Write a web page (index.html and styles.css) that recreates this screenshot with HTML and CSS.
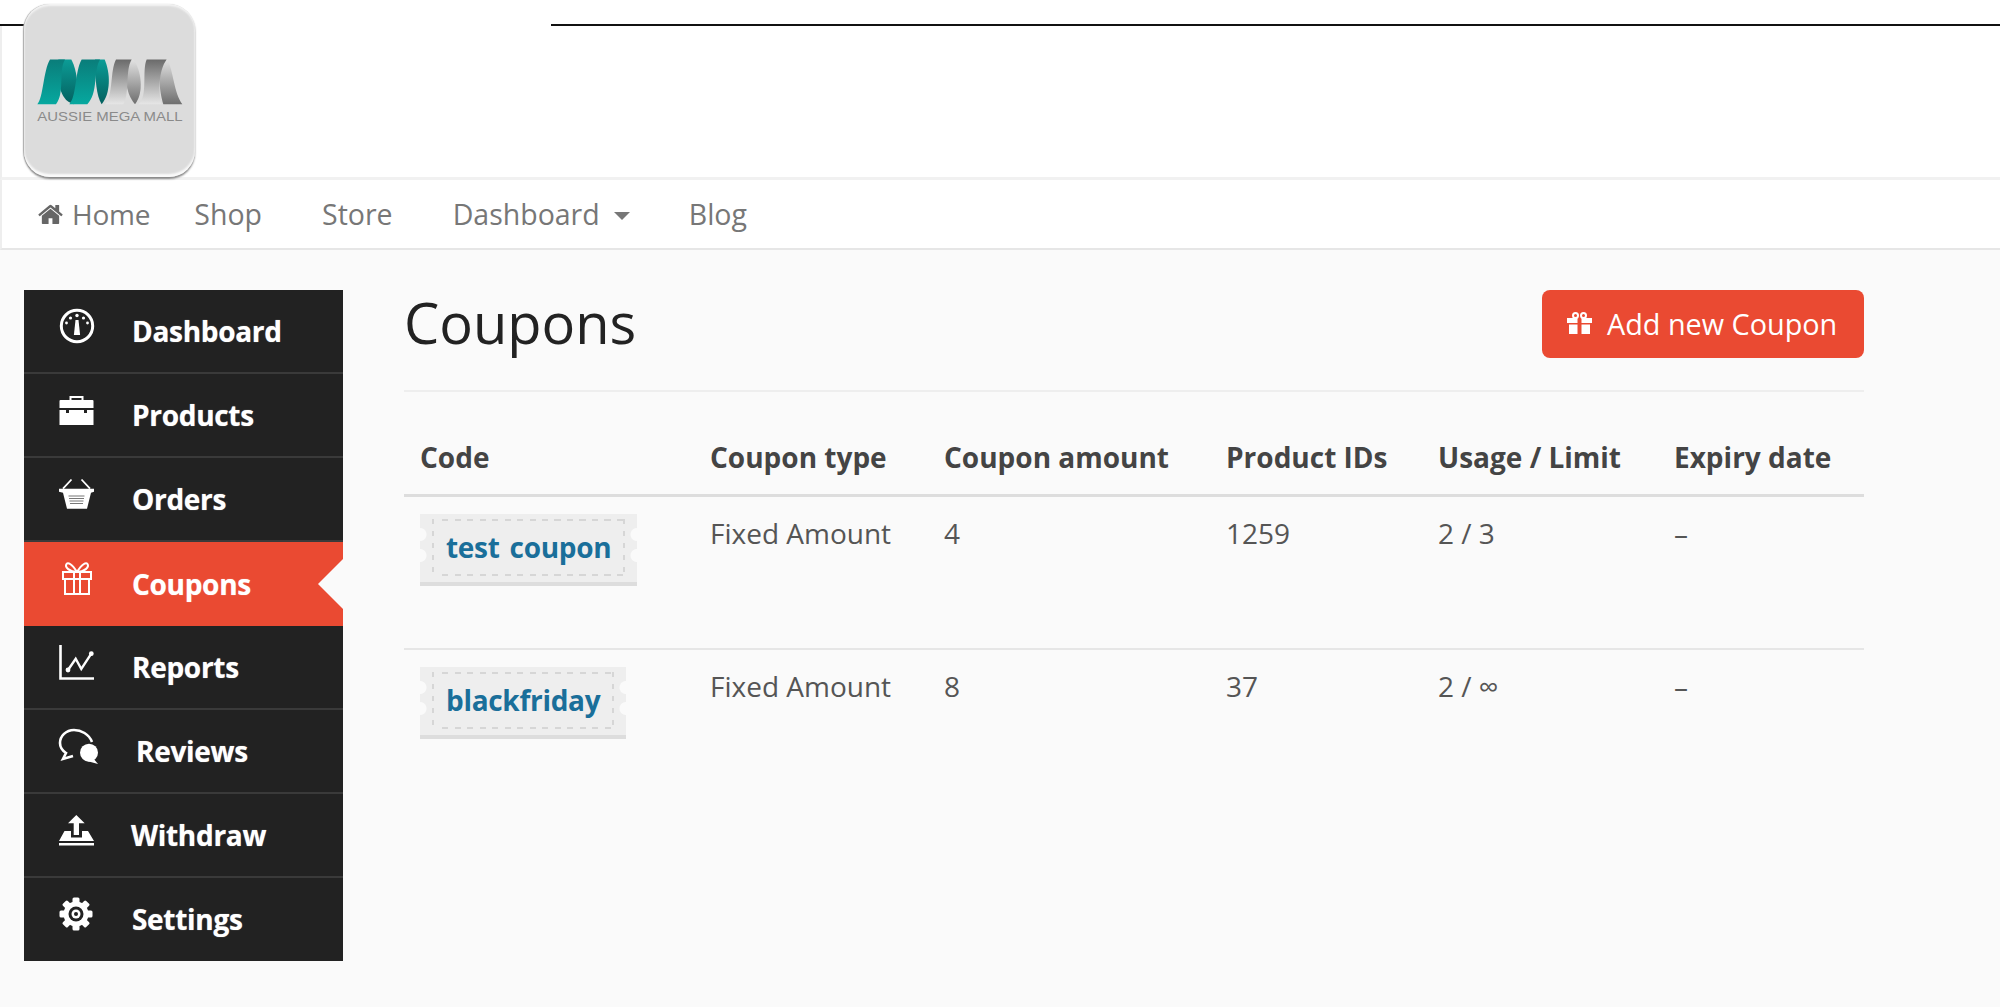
FILE: index.html
```html
<!DOCTYPE html>
<html lang="en">
<head>
<meta charset="utf-8">
<title>Coupons</title>
<link rel="stylesheet" href="styles.css">
</head>
<body>
<div class="topline"><span class="seg seg-left"></span><span class="seg seg-right"></span></div>
<header class="brand">
  <div class="logo">
    <svg class="logo-art" viewBox="72 12 513 518">
      <defs>
        <linearGradient id="tu" x1="0" y1="1" x2="0" y2="0"><stop offset="0" stop-color="#06a89f"/><stop offset="1" stop-color="#0a7d7a"/></linearGradient>
        <linearGradient id="td" x1="0" y1="0" x2="0" y2="1"><stop offset="0" stop-color="#0c9c96"/><stop offset="1" stop-color="#03605f"/></linearGradient>
        <linearGradient id="gu" x1="0" y1="1" x2="0" y2="0"><stop offset="0" stop-color="#e6e6e6"/><stop offset="1" stop-color="#6a6a6a"/></linearGradient>
        <linearGradient id="gd" x1="0" y1="0" x2="0" y2="1"><stop offset="0" stop-color="#e2e2e2"/><stop offset="1" stop-color="#6e6e6e"/></linearGradient>
      </defs>
      <g transform="translate(90 150)">
        <path fill="url(#td)" d="M85 28H124C142 60 150 130 132 162 112 155 100 150 85 100Z"/>
        <path fill="url(#tu)" d="M22 162C40 145 40 60 60 28H105C85 60 105 130 78 162Z"/>
        <path fill="url(#td)" d="M195 28H224C242 70 242 130 215 162 200 140 195 90 195 28Z"/>
        <path fill="url(#tu)" d="M118 162C140 140 135 60 155 28H210C190 60 205 130 172 162Z"/>
        <path fill="url(#gd)" d="M300 28H310C335 60 342 130 315 162 285 130 280 60 300 28Z"/>
        <path fill="url(#gu)" d="M225 162C250 140 240 60 258 28H305C285 60 300 130 280 162Z"/>
        <path fill="url(#gd)" d="M400 28H412C430 60 432 130 457 162H400C390 130 380 60 400 28Z"/>
        <path fill="url(#gu)" d="M325 162C355 140 335 60 350 28H410C385 60 385 130 395 162Z"/>
      </g>
      <text class="logo-text" x="112" y="362" textLength="436" lengthAdjust="spacingAndGlyphs">AUSSIE MEGA MALL</text>
    </svg>
  </div>
</header>
<nav class="navbar">
  <a class="nav-link nav-home">
    <svg class="home-icon" viewBox="0 0 1664 1792"><path d="M1408 992v480q0 26-19 45t-45 19h-384v-384h-256v384h-384q-26 0-45-19t-19-45v-480q0-1 .5-3t.5-3l575-474 575 474q1 2 1 6zm223-69l-62 74q-8 9-21 11h-3q-13 0-21-7l-692-577-692 577q-12 8-24 7-13-2-21-11l-62-74q-8-10-7-23.5t11-21.5l719-599q32-26 76-26t76 26l244 204v-195q0-14 9-23t23-9h192q14 0 23 9t9 23v408l219 182q10 8 11 21.5t-7 23.5z"/></svg>
    <span class="home-text">Home</span></a>
  <a class="nav-link nav-shop">Shop</a>
  <a class="nav-link nav-store">Store</a>
  <a class="nav-link nav-dash">Dashboard<span class="caret"></span></a>
  <a class="nav-link">Blog</a>
</nav>
<div class="page">
  <aside class="sidebar">
    <a class="side-item">
      <svg class="side-icon" viewBox="0 0 36 36"><circle cx="18" cy="18" r="15.700" fill="none" stroke="#fff" stroke-width="3"/><circle cx="18" cy="7.500" r="1.700" fill="#fff"/><circle cx="11.500" cy="10" r="1.600" fill="#fff"/><circle cx="24.500" cy="10" r="1.600" fill="#fff"/><circle cx="7.500" cy="15" r="1.400" fill="#fff"/><circle cx="28.500" cy="15" r="1.400" fill="#fff"/><path fill="#fff" d="M16.500 12h3l1.600 15h-6.200z"/></svg>
      <span>Dashboard</span></a>
    <a class="side-item">
      <svg class="side-icon" viewBox="0 0 36 36"><path fill="none" stroke="#fff" stroke-width="2" d="M11.500 9V5h12v4"/><path fill="#fff" d="M1.500 8h32a1 1 0 0 1 1 1v7h-34V9a1 1 0 0 1 1-1zM.5 18h6.500v3h3v-3h15v3h3v-3h6.500v15H.5z"/></svg>
      <span>Products</span></a>
    <a class="side-item">
      <svg class="side-icon" viewBox="0 0 36 36"><path fill="none" stroke="#fff" stroke-width="1.800" d="M12.500 3.500 4 12.700M22.500 3.500l8.500 9.200"/><path fill="#fff" d="M0 12.700h35v3l-3 1-4 16H8l-4-16-4-1z"/><path fill="none" stroke="#777" stroke-width="1.200" d="M9.500 20h16M10 22.500h15M10.500 25h14M11 27.500h13"/></svg>
      <span>Orders</span></a>
    <a class="side-item side-active">
      <svg class="side-icon" viewBox="0 0 36 36"><g fill="none" stroke="#fff" stroke-width="2"><path d="M4 11h28v7H4zM6 18h24v15H6zM15 11v22M21 11v22"/><path d="M18 11C13 3 9 1 7.500 3c-2 3 3 8 10.500 8zM18 11c5-8 9-10 10.500-8 2 3-3 8-10.500 8z"/></g></svg>
      <span>Coupons</span></a>
    <a class="side-item">
      <svg class="side-icon" viewBox="0 0 36 36"><g fill="none" stroke="#fff"><path stroke-width="2.600" d="M1.500 1v33.500h33.500"/><path stroke-width="2.400" d="M9 26l7.700-11.300L22.300 25l10-15.300"/></g><circle cx="9" cy="26" r="2.400" fill="#fff"/><circle cx="32.300" cy="9.700" r="2.400" fill="#fff"/></svg>
      <span>Reports</span></a>
    <a class="side-item side-reviews">
      <svg class="side-icon" viewBox="0 0 36 36"><path fill="none" stroke="#fff" stroke-width="2.600" d="M33 14C30 6 22 2 15 2 7 2 1 8 1 15c0 5 3 8 6 10l-3 6 10-3"/><circle cx="30" cy="24.700" r="9" fill="#fff"/><path fill="#fff" d="M34 30l5 6-11-3z"/></svg>
      <span>Reviews</span></a>
    <a class="side-item side-withdraw">
      <svg class="side-icon" viewBox="0 0 36 36"><path fill="#fff" d="M17.300 3 9 11.300h5.700V23H20V11.300h5.700zM5.500 19H12v6.500h11V19h6l6 10H0zM0 31h35v2.500H0z"/></svg>
      <span>Withdraw</span></a>
    <a class="side-item side-last">
      <svg class="side-icon" viewBox="0 0 36 36"><g fill="#fff"><circle cx="17" cy="18" r="12.500"/><rect x="13.500" y="1.500" width="7" height="33" rx="1.500"/><rect x="13.500" y="1.500" width="7" height="33" rx="1.500" transform="rotate(45 17 18)"/><rect x="13.500" y="1.500" width="7" height="33" rx="1.500" transform="rotate(90 17 18)"/><rect x="13.500" y="1.500" width="7" height="33" rx="1.500" transform="rotate(135 17 18)"/></g><circle cx="17" cy="18" r="7.500" fill="#222"/><circle cx="17" cy="18" r="4.500" fill="#fff"/><circle cx="17" cy="18" r="2" fill="#222"/></svg>
      <span>Settings</span></a>
  </aside>
  <main class="content">
    <div class="heading">
      <h1>Coupons</h1>
      <a class="add-btn">
        <svg class="btn-icon" viewBox="0 0 25 22"><g fill="none" stroke="#fff" stroke-width="2"><circle cx="8.500" cy="3.500" r="2.500"/><circle cx="16.500" cy="3.500" r="2.500"/></g><path fill="#fff" d="M0 6h10.500v5H0zM14.500 6H25v5H14.500zM2 12.500h8.500V22H2zM14.500 12.500H23V22h-8.500z"/></svg>
        Add new Coupon</a>
    </div>
    <table class="coupons">
      <thead>
        <tr><th class="c-code">Code</th><th class="c-type">Coupon type</th><th class="c-amt">Coupon amount</th><th class="c-ids">Product IDs</th><th class="c-use">Usage / Limit</th><th class="c-exp">Expiry date</th></tr>
      </thead>
      <tbody>
        <tr class="row-first"><td><a class="code"><span class="code-in">test coupon</span></a></td><td>Fixed Amount</td><td>4</td><td>1259</td><td>2 / 3</td><td>–</td></tr>
        <tr><td><a class="code"><span class="code-in">blackfriday</span></a></td><td>Fixed Amount</td><td>8</td><td>37</td><td>2 / ∞</td><td>–</td></tr>
      </tbody>
    </table>
  </main>
</div>
</body>
</html>
```
FILE: styles.css
```css
* { box-sizing: border-box; }
html, body { margin: 0; height: 100%; }
body {
  background: #fafafa;
  font-family: "Open Sans", "Noto Sans", sans-serif;
  color: #444;
  overflow: hidden;
  position: relative;
}
.topline { height: 26px; display: flex; justify-content: space-between; align-items: flex-end; background: #fff; }
.seg { height: 2px; background: #111; display: block; }
.seg-left { width: 26px; }
.seg-right { width: 1449px; }
.brand { height: 154px; background: #fff; border-left: 2px solid #eee; border-bottom: 3px solid #f1f1f1; }
.logo {
  position: absolute; left: 24px; top: 4px; width: 171px; height: 173px;
  background: #dcdcdc; border-radius: 26px;
  box-shadow: inset 0 2px 2px #f4f4f4, inset 0 -3px 2px #fafafa, 0 2px 2px #888, -1px 0 1px #bbb;
}
.logo-art { width: 171px; height: 173px; display: block; }
.logo-text { font-family: "Liberation Sans", Arial, sans-serif; font-size: 38px; fill: #8a8a8a; }
.navbar {
  height: 70px; background: #fff; border-left: 2px solid #eee; border-bottom: 2px solid #e6e6e6;
  display: flex; align-items: center; padding-left: 36px; font-size: 28.5px; color: #777;
}
.nav-link { display: flex; align-items: center; }
.nav-home { margin-right: 44px; }
.home-text { font-size: 28px; letter-spacing: -0.2px; }
.nav-shop { margin-right: 60px; }
.nav-store { margin-right: 60px; }
.nav-dash { margin-right: 59px; }
.home-icon { width: 25px; height: 27px; fill: #666; margin-right: 9px; }
.caret { width: 0; height: 0; margin-left: 14px; margin-top: 3px; border-left: 8px solid transparent; border-right: 8px solid transparent; border-top: 8px solid #777; }
.page { display: flex; align-items: flex-start; padding: 40px 0 0 24px; gap: 61px; }
.sidebar { width: 319px; background: #222; display: flex; flex-direction: column; }
.side-item {
  height: 84px; display: flex; align-items: center; padding-left: 35px; position: relative;
  color: #fff; font-weight: 700; font-size: 28px; letter-spacing: -0.3px;
  text-shadow: 0 0 1px rgba(255,255,255,.6);
  border-bottom: 2px solid #3a3a3a;
}
.side-last { height: 83px; border-bottom: 0; padding-bottom: 2px; }
.side-icon { width: 36px; height: 36px; margin-right: 37px; margin-bottom: 10px; flex: none; overflow: visible; }
.side-reviews .side-icon { margin-right: 41px; }
.side-withdraw .side-icon { margin-right: 36px; }
.side-active { background: #ea4a32; border-bottom: 0; }
.side-active::after {
  content: ""; position: absolute; right: 0; top: 50%; margin-top: -25px;
  border-top: 25px solid transparent; border-bottom: 25px solid transparent; border-right: 25px solid #fafafa;
}
.content { width: 1460px; }
.heading { height: 102px; display: flex; justify-content: space-between; align-items: flex-start; border-bottom: 2px solid #eee; }
h1 { margin: 0; font-weight: 400; font-size: 56px; line-height: 64px; color: #222; }
.add-btn {
  width: 322px; height: 68px; background: #ea4a32; color: #fff; border-radius: 8px;
  display: flex; align-items: center; padding: 0 0 2px 25px; font-size: 28.8px;
}
.btn-icon { width: 25px; height: 22px; margin-right: 15px; }
.coupons { width: 100%; border-collapse: collapse; table-layout: fixed; }
.coupons th { text-align: left; font-weight: 700; font-size: 28px; color: #444; padding: 28px 16px 0; height: 103px; border-bottom: 3px solid #ddd; }
.coupons td { font-size: 28px; color: #555; vertical-align: top; padding: 18px 16px 0; height: 154px; line-height: 36px; }
.row-first td { border-bottom: 2px solid #e6e6e6; }
.c-code { width: 290px; }
.c-type { width: 234px; }
.c-amt { width: 282px; }
.c-ids { width: 212px; }
.c-use { width: 236px; }
.code {
  display: inline-block; margin-top: -1px; border-bottom: 4px solid #ddd;
  padding: 5px 12px 6px; font-weight: 700; font-size: 28px; color: #1a6f9a;
  background:
    radial-gradient(circle at 0 50%, #fafafa 6px, transparent 7px) 0 10px / 8px 21px no-repeat,
    radial-gradient(circle at 0 50%, #fafafa 6px, transparent 7px) 0 31px / 8px 21px no-repeat,
    radial-gradient(circle at 100% 50%, #fafafa 6px, transparent 7px) 100% 10px / 8px 21px no-repeat,
    radial-gradient(circle at 100% 50%, #fafafa 6px, transparent 7px) 100% 31px / 8px 21px no-repeat,
    #eee;
}
.code-in {
  display: block; padding: 9px 14px 10px; line-height: 38px; white-space: nowrap;
  letter-spacing: -0.3px; word-spacing: 3px;
  background:
    repeating-linear-gradient(90deg, #d6d6d6 0 6px, transparent 6px 12.5px) 10px 0 / 100% 2px no-repeat,
    repeating-linear-gradient(90deg, #d6d6d6 0 6px, transparent 6px 12.5px) 10px 100% / 100% 2px no-repeat,
    repeating-linear-gradient(180deg, #d6d6d6 0 5px, transparent 5px 12px) 0 0 / 2px 100% no-repeat,
    repeating-linear-gradient(180deg, #d6d6d6 0 5px, transparent 5px 12px) 100% 0 / 2px 100% no-repeat;
}
```
